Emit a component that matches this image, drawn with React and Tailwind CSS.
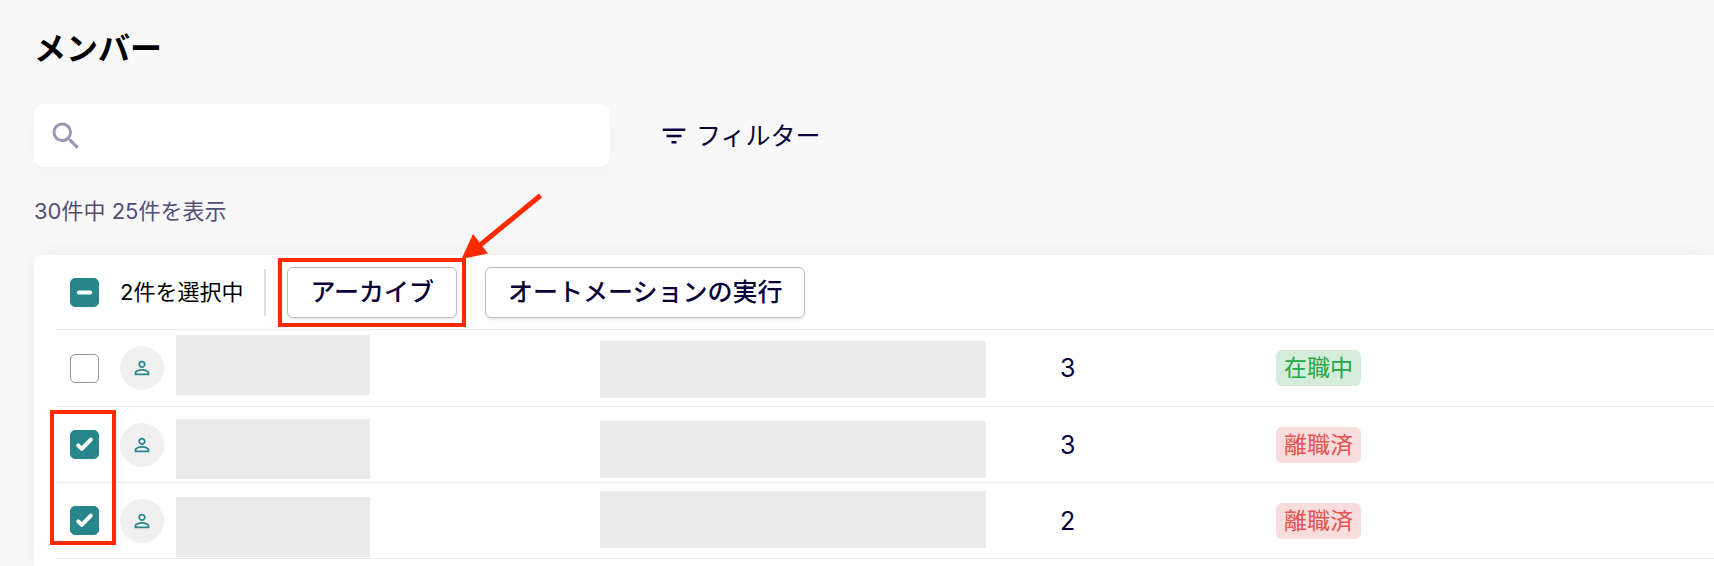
import { useEffect, useRef } from 'react'
import { MdSearch, MdFilterList, MdPersonOutline } from 'react-icons/md'

const members = [
  {
    id: 1,
    checked: false,
    count: 3,
    status: '在職中',
    nameMask: 'top-[5px]',
    mailMask: 'top-[11px]'
  },
  {
    id: 2,
    checked: true,
    count: 3,
    status: '離職済',
    nameMask: 'top-[12px]',
    mailMask: 'top-[14px]'
  },
  {
    id: 3,
    checked: true,
    count: 2,
    status: '離職済',
    nameMask: 'top-[14px]',
    mailMask: 'top-[8px]'
  }
]

const statusStyles = {
  在職中: 'bg-[#d4edda] text-[#28a745]',
  離職済: 'bg-[#f9dcdc] text-[#e55353]'
}

function Checkbox({ label, defaultChecked, indeterminate = false }) {
  const ref = useRef(null)

  useEffect(() => {
    ref.current.indeterminate = indeterminate
  }, [indeterminate])

  return (
    <span className="relative block size-[29px] shrink-0">
      <input
        ref={ref}
        type="checkbox"
        aria-label={label}
        defaultChecked={defaultChecked}
        className="peer block size-full appearance-none rounded-[5px] border border-[#8e959c] bg-white checked:border-[#26868c] checked:bg-[#26868c] indeterminate:border-[#26868c] indeterminate:bg-[#26868c]"
      />
      <svg
        viewBox="0 0 29 29"
        fill="none"
        stroke="white"
        strokeWidth="4"
        strokeLinecap="round"
        strokeLinejoin="round"
        className="pointer-events-none absolute inset-0 hidden peer-checked:block peer-indeterminate:block"
      >
        {indeterminate ? <path d="M8.8 14.5h11.4" /> : <path d="M8.2 15.3l3.6 3.6 9-9.2" />}
      </svg>
    </span>
  )
}

function ActionButton({ children }) {
  return (
    <button
      type="button"
      className="h-[51px] rounded-md border border-[#b9bcc0] bg-white px-[22px] text-[25px] leading-8 font-medium whitespace-nowrap text-[#0a0338] shadow-[0_2px_2px_rgba(0,0,0,0.08)]"
    >
      {children}
    </button>
  )
}

function MemberRow({ member }) {
  return (
    <tr className="h-[76px] border-b border-[#e9ebed]">
      <td className="pt-px pl-[14px]">
        <Checkbox label={`メンバー ${member.id}`} defaultChecked={member.checked} />
      </td>
      <td className="relative pt-px">
        <span className="flex size-11 items-center justify-center rounded-full bg-[#f0f0f0]">
          <MdPersonOutline className="size-[22px] text-[#26868c]" />
        </span>
        <span className={`absolute left-14 h-[60px] w-[194px] bg-[#ebebeb] ${member.nameMask}`} />
      </td>
      <td className="relative">
        <span className={`absolute left-0 h-[57px] w-[386px] bg-[#ebebeb] ${member.mailMask}`} />
      </td>
      <td className="pt-px text-[25px] leading-8 text-[#0a0338]">{member.count}</td>
      <td className="pt-px">
        <span className={`inline-block rounded-md px-2 align-middle text-[23px] leading-9 ${statusStyles[member.status]}`}>
          {member.status}
        </span>
      </td>
    </tr>
  )
}

function App() {
  return (
    <main className="flex min-h-screen flex-col overflow-hidden bg-[#f8f8f8] pt-[29px] pl-[34px] font-['Inter','Noto_Sans_CJK_JP',sans-serif]">
      <h1 className="text-[32px] leading-10 font-bold text-black">メンバー</h1>

      {/* Search and filter */}
      <div className="mt-[35px] flex items-center gap-[49px]">
        <label className="flex h-[63px] w-[576px] items-center gap-2 rounded-[10px] bg-white px-[14px] shadow-[0_6px_24px_rgba(0,0,0,0.03)]">
          <MdSearch className="size-9 shrink-0 text-[#9b97b0]" />
          <input type="search" aria-label="検索" className="min-w-0 flex-1 bg-transparent text-[22px] outline-none" />
        </label>
        <button type="button" className="flex items-center gap-[7px] text-[25px] leading-8 text-[#0a0338]">
          <MdFilterList className="size-[30px]" />
          フィルター
        </button>
      </div>

      <p className="mt-7 text-[22px] leading-8 text-[#544f78]">30件中 25件を表示</p>

      <section className="mt-7 flex-1 rounded-tl-md bg-white pl-[22px] shadow-[0_0_24px_rgba(0,0,0,0.05)]">
        {/* Bulk actions */}
        <div className="flex h-[75px] items-center gap-[21px] border-b border-[#e6e9ed] pl-[14px]">
          <Checkbox label="すべて選択" indeterminate />
          <span className="text-[22px] leading-8 whitespace-nowrap text-black">2件を選択中</span>
          <span className="h-[47px] w-0.5 bg-[#dde0e6]" />
          <div className="flex gap-7">
            <div className="relative">
              <ActionButton>アーカイブ</ActionButton>
              <span className="pointer-events-none absolute -inset-[9px] border-4 border-[#ff2a00]" />
              <svg
                viewBox="0 0 82 66"
                className="pointer-events-none absolute bottom-full left-full mb-2 ml-1 h-[66px] w-[82px]"
              >
                <path d="M79.5 2.5L18 53" stroke="#ff2a00" strokeWidth="5" fill="none" />
                <path d="M0.5 66L12 41L27 60.5Z" fill="#ff2a00" />
              </svg>
            </div>
            <ActionButton>オートメーションの実行</ActionButton>
          </div>
        </div>

        {/* Member list */}
        <div className="relative">
          <table className="w-full table-fixed border-collapse text-left">
            <colgroup>
              <col className="w-16" />
              <col className="w-[480px]" />
              <col className="w-[460px]" />
              <col className="w-[216px]" />
              <col />
            </colgroup>
            <tbody>
              {members.map((member) => (
                <MemberRow key={member.id} member={member} />
              ))}
            </tbody>
          </table>
          <span className="pointer-events-none absolute top-20 -left-1.5 h-[135px] w-[66px] border-4 border-[#ff2a00]" />
        </div>
      </section>
    </main>
  )
}

export default App
